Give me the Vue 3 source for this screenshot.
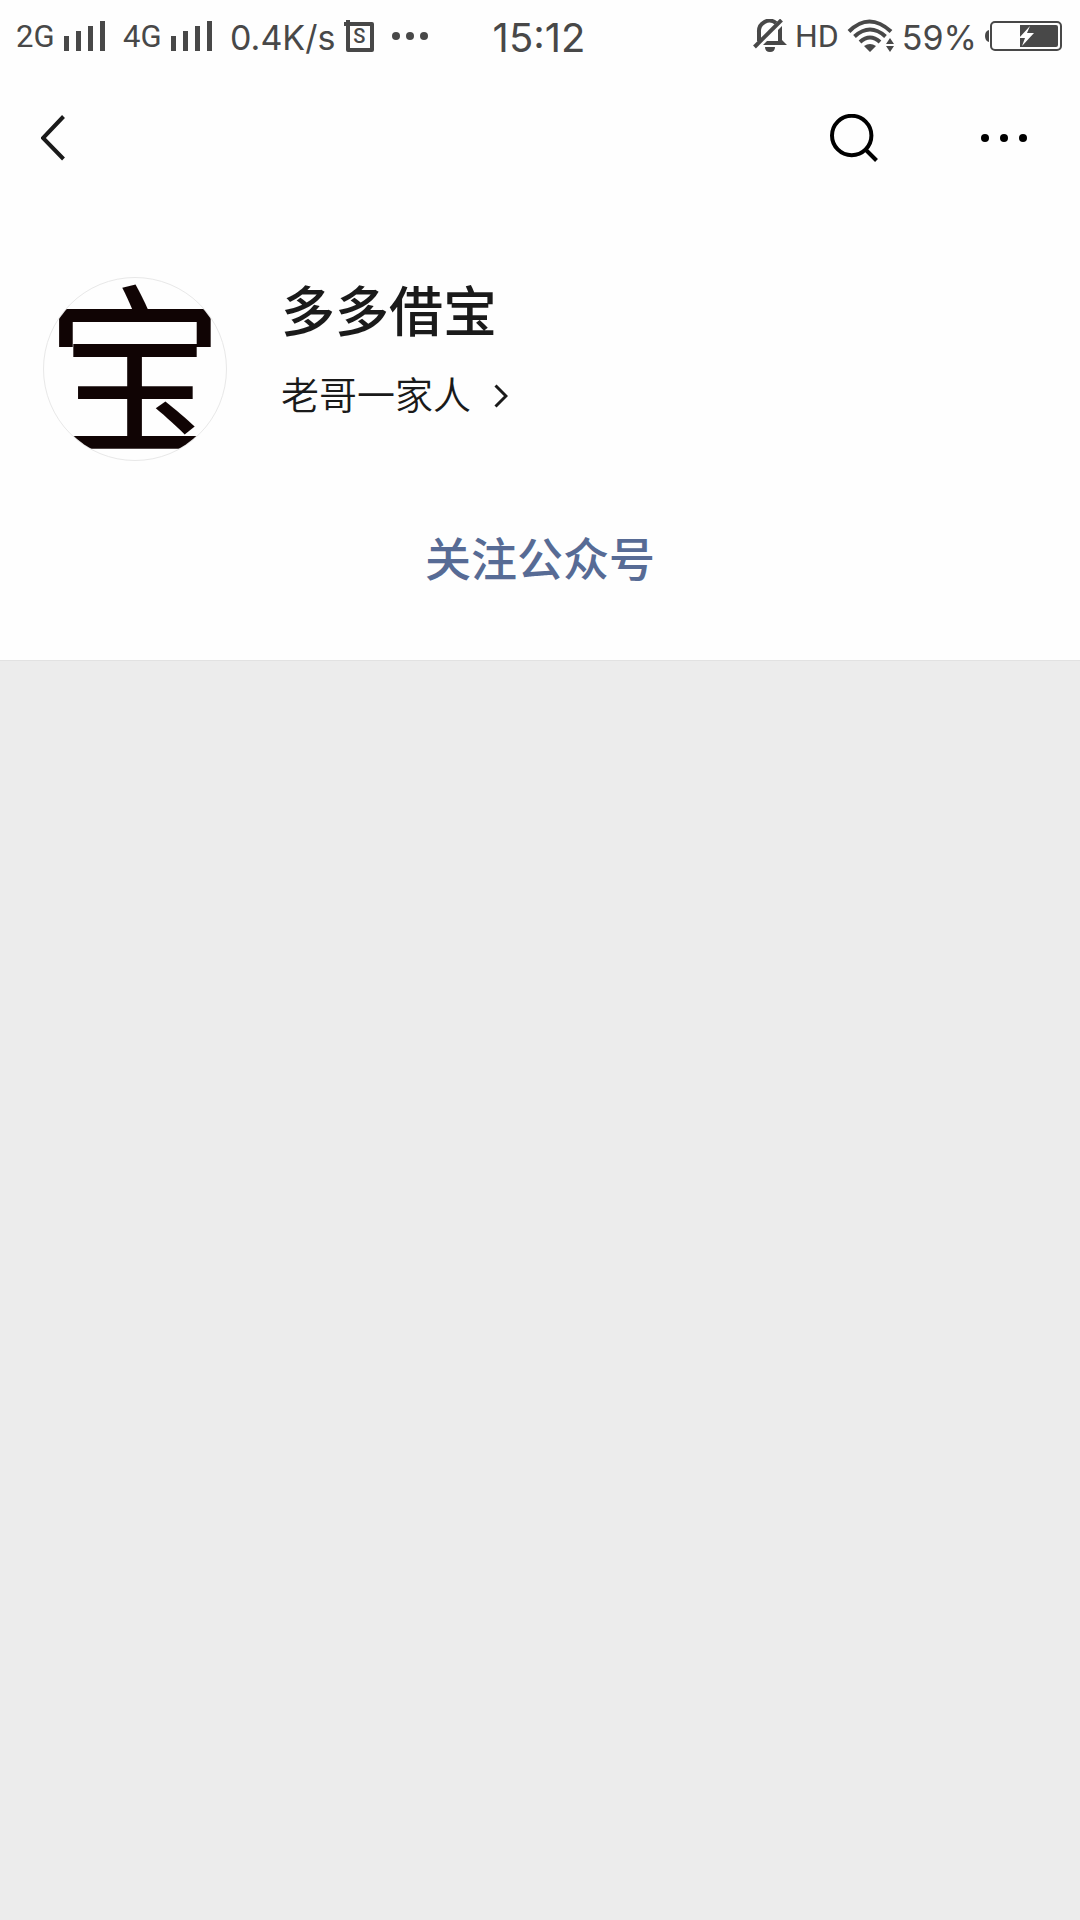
<template>
  <div class="page">
    <section class="panel">
      <!-- Status bar -->
      <div class="status-bar">
        <div class="status-left">
          <div v-for="net in networks" :key="net" class="network">
            <span class="net-label">{{ net }}</span>
            <svg class="signal" viewBox="0 0 41 30" width="41" height="30">
              <path d="M0 15h5v15H0zM12 10h5v20h-5zM24 5h5v25h-5zM36 0h5v30h-5z" />
            </svg>
          </div>
          <span class="speed">0.4K/s</span>
          <span class="app-badge">
            <svg viewBox="0 0 30 32" width="30" height="32">
              <path d="M2 0h4v2h22q2 0 2 2v26q0 2-2 2H4q-2 0-2-2V6H0V2h2zM6 6v22h20V6z" fill-rule="evenodd" />
            </svg>
            <span class="app-letter">S</span>
          </span>
          <svg class="status-dots" viewBox="0 0 36 8" width="36" height="8">
            <circle cx="4" cy="4" r="4" />
            <circle cx="18" cy="4" r="4" />
            <circle cx="32" cy="4" r="4" />
          </svg>
        </div>

        <time class="clock">15:12</time>

        <div class="status-right">
          <svg viewBox="0 0 34 34" width="34" height="34">
            <path d="M6 22V13a10.500 10.500 0 0 1 17-9" fill="none" stroke="#484848" stroke-width="4" />
            <path d="M25 11l4-4v14l5 5H10l4-4h11zM12 28h10q0 5-5 5t-5-5z" />
            <path d="M1.500 28L28.500 1" fill="none" stroke="#484848" stroke-width="4" />
          </svg>
          <span class="hd">HD</span>
          <svg class="wifi" viewBox="0 0 47 34" width="47" height="34">
            <g fill="none" stroke="#484848" stroke-width="4">
              <path d="M2 12.500q20-20 42 0" />
              <path d="M7.500 17.500q15.500-14 31 0" />
              <path d="M13 23q10-9 20 0" />
            </g>
            <path d="M17 27q6-4 12 0l-6 6zM39 25l4-6 4 6zM39 27h8l-4 6z" />
          </svg>
          <span class="percent">59%</span>
          <svg class="battery" viewBox="0 0 77 30" width="77" height="30">
            <rect x="6" y="1" width="70" height="28" rx="4" fill="none" stroke="#484848" stroke-width="2" />
            <path d="M4 9v12q-4-1-4-6t4-6zM35 4h36q2 0 2 2v18q0 2-2 2H35z" />
            <path class="bolt" d="M45 5L34 17h6l-3 8 12-13h-7z" />
          </svg>
        </div>
      </div>

      <!-- Navigation -->
      <header class="nav">
        <button type="button" class="icon-btn" aria-label="返回">
          <svg viewBox="0 0 24 46" width="24" height="46">
            <path d="M22.500 1.500L2 23l20.500 21" fill="none" stroke="#1a1a1a" stroke-width="4" />
          </svg>
        </button>
        <div class="nav-actions">
          <button type="button" class="icon-btn" aria-label="搜索">
            <svg viewBox="0 0 48 48" width="48" height="48">
              <circle cx="21.700" cy="21.500" r="19.700" fill="none" stroke="#000" stroke-width="4" />
              <path d="M35.500 35.500l11 11" stroke="#000" stroke-width="4" />
            </svg>
          </button>
          <button type="button" class="icon-btn" aria-label="更多">
            <svg class="more" viewBox="0 0 46 8" width="46" height="8">
              <circle cx="4" cy="4" r="4" />
              <circle cx="23" cy="4" r="4" />
              <circle cx="42" cy="4" r="4" />
            </svg>
          </button>
        </div>
      </header>

      <!-- Account -->
      <div class="profile">
        <div class="avatar">宝</div>
        <div class="info">
          <h1 class="name">多多借宝</h1>
          <a href="#" class="owner">
            老哥一家人
            <svg viewBox="0 0 14 24" width="14" height="24">
              <path d="M1.500 1.500L12 12 1.500 22.500" fill="none" stroke="#1a1a1a" stroke-width="3" />
            </svg>
          </a>
        </div>
      </div>

      <button type="button" class="follow">关注公众号</button>
    </section>
  </div>
</template>

<script setup>
const networks = ["2G", "4G"];
</script>

<style>
body {
  background: #ececec;
}
</style>

<style scoped>
.page {
  min-height: 100vh;
  background: #ececec;
  color: #1a1a1a;
  font-family: Roboto, "Noto Sans CJK SC", sans-serif;
}

.panel {
  background: #fefefe;
  border-bottom: 1px solid #e2e2e2;
  padding-bottom: 50px;
}

svg {
  display: block;
  flex: none;
}

.status-bar {
  display: grid;
  grid-template-columns: 1fr auto 1fr;
  align-items: center;
  height: 72px;
  padding: 0 18px 0 16px;
  color: #484848;
  fill: #484848;
}

.status-left,
.status-right {
  display: flex;
  align-items: center;
}

.status-right {
  justify-content: flex-end;
  gap: 8px;
}

.network {
  display: flex;
  align-items: center;
  gap: 10px;
  margin-right: 18px;
}

.net-label {
  width: 38px;
  font-size: 31px;
}

.speed,
.percent,
.clock {
  padding-top: 2px;
  font-family: Inter, sans-serif;
  font-size: 34px;
}

.clock {
  font-size: 40px;
}

.hd {
  font-size: 32px;
}

.app-badge {
  display: grid;
  place-items: center;
  margin: 0 18px 0 9px;
}

.app-badge > * {
  grid-area: 1 / 1;
}

.app-letter {
  font-size: 20px;
  font-weight: 500;
  line-height: 32px;
}

.bolt {
  fill: #fefefe;
}

.nav {
  display: flex;
  align-items: center;
  justify-content: space-between;
  box-sizing: border-box;
  height: 130px;
  padding: 2px 33px 0 21px;
}

.nav-actions {
  display: flex;
  gap: 63px;
}

.icon-btn {
  display: flex;
  align-items: center;
  justify-content: center;
  min-height: 88px;
  padding: 0 20px;
  border: 0;
  background: none;
}

.profile {
  display: flex;
  gap: 54px;
  padding: 75px 43px 0;
}

.avatar {
  display: flex;
  justify-content: center;
  flex: none;
  box-sizing: border-box;
  width: 184px;
  height: 184px;
  border: 1px solid #e8e8e8;
  border-radius: 50%;
  overflow: hidden;
  color: #100404;
  font-family: "Noto Sans CJK SC", sans-serif;
  font-size: 182px;
  font-weight: 400;
  line-height: 164px;
}

.name {
  margin: 0 0 21px;
  font-size: 54px;
  font-weight: 500;
  line-height: 74px;
}

.owner {
  display: flex;
  align-items: center;
  gap: 23px;
  color: inherit;
  font-size: 38px;
  font-weight: 350;
  line-height: 48px;
  text-decoration: none;
}

.follow {
  display: block;
  margin: 49px auto 0;
  padding: 0 40px;
  border: 0;
  background: none;
  color: #576b95;
  font-family: inherit;
  font-size: 46px;
  font-weight: 500;
  line-height: 100px;
}
</style>
